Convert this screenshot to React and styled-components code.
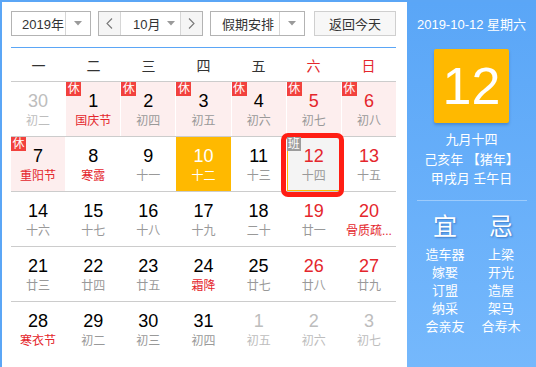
import React from "react";
import styled, { createGlobalStyle, css } from "styled-components";

const Global = createGlobalStyle`
  html, body { margin: 0; padding: 0; background: #fff; }
  body { font-family: "Liberation Sans", "Noto Sans CJK SC", sans-serif; }
`;

const FONT = `"Liberation Sans", "Noto Sans CJK SC", sans-serif`;
const BLUE = "#5ba6f6";
const RED = "#e4262c";

const Frame = styled.div`
  display: flex;
  width: 536px;
  height: 367px;
  box-sizing: border-box;
  border-top: 2px solid ${BLUE};
  border-left: 2px solid ${BLUE};
  overflow: hidden;
  font-family: ${FONT};
`;

const Main = styled.div`
  width: 405px;
  box-sizing: border-box;
  padding: 9px 11px 0 9px;
  display: flex;
  flex-direction: column;
`;

const Toolbar = styled.div`
  display: flex;
  height: 25px;
  font-size: 13px;
  color: #333;
`;

const Box = styled.div`
  display: flex;
  box-sizing: border-box;
  width: ${(p) => p.$w}px;
  margin-left: ${(p) => p.$ml || 0}px;
  border: 1px solid #b3b3b3;
  background: #fff;
`;

const SelText = styled.div`
  flex: 1;
  display: flex;
  align-items: center;
  padding-left: ${(p) => p.$pl}px;
  white-space: nowrap;
`;

const ArrowCell = styled.div`
  width: ${(p) => p.$w}px;
  display: flex;
  align-items: center;
  justify-content: center;
  border-left: ${(p) => (p.$noline ? "none" : "1px solid #d6d6d6")};
`;

const NavBtn = styled.div`
  width: 21px;
  display: flex;
  align-items: center;
  justify-content: center;
  background: #f5f5f5;
  ${(p) =>
    p.$side === "left"
      ? css`border-right: 1px solid #d6d6d6;`
      : css`border-left: 1px solid #d6d6d6;`}
`;

const TodayBtn = styled.div`
  width: 82px;
  margin-left: 9px;
  box-sizing: border-box;
  border: 1px solid #cfcfcf;
  background: #f7f7f7;
  display: flex;
  align-items: center;
  justify-content: center;
`;

const Triangle = () => (
  <svg width="8" height="5" viewBox="0 0 8 5">
    <path d="M0 0 L8 0 L4 4.5 Z" fill="#9a9a9a" />
  </svg>
);

const Chevron = ({ dir }) => (
  <svg width="7" height="11" viewBox="0 0 7 11">
    <polyline
      points={dir === "left" ? "6,0.5 1,5.5 6,10.5" : "1,0.5 6,5.5 1,10.5"}
      fill="none"
      stroke="#777"
      strokeWidth="1.1"
    />
  </svg>
);

const BlueLine = styled.div`
  height: 1px;
  margin-top: 11px;
  background: ${BLUE};
`;

const WeekHead = styled.div`
  display: grid;
  grid-template-columns: repeat(7, 1fr);
  height: 34px;
  box-sizing: border-box;
  border-bottom: 1px solid #cccccc;
  align-items: center;
  text-align: center;
  font-size: 14px;
`;

const WeekDay = styled.div`
  color: ${(p) => (p.$weekend ? RED : "#333")};
`;

const Row = styled.div`
  display: grid;
  grid-template-columns: repeat(7, 1fr);
  column-gap: 1px;
  height: 55px;
  box-sizing: border-box;
  border-bottom: 1px solid #cccccc;
  &:last-child {
    border-bottom: none;
  }
`;

const Cell = styled.div`
  position: relative;
  display: flex;
  flex-direction: column;
  align-items: center;
  padding-top: 9px;
  box-sizing: border-box;
  min-width: 0;
  background: ${(p) =>
    p.$today ? "#ffb900" : p.$rest ? "#fdeeee" : p.$picked ? "#f4f4f4" : "#fff"};
  ${(p) =>
    p.$picked &&
    css`
      box-shadow: inset 0 0 0 1px #ffb900;
      &::after {
        content: "";
        position: absolute;
        left: -6px;
        right: -3px;
        top: -4px;
        bottom: -6px;
        border: 5px solid #ff1e14;
        border-radius: 7px;
        z-index: 2;
      }
    `}
`;

const Num = styled.div`
  font-size: 18px;
  line-height: 20px;
  color: ${(p) => p.$c};
`;

const Lunar = styled.div`
  margin-top: 2px;
  font-size: 12px;
  line-height: 16px;
  color: ${(p) => p.$c};
  white-space: nowrap;
`;

const Badge = styled.div`
  position: absolute;
  left: 0;
  top: 0;
  width: ${(p) => (p.$work ? 14 : 15)}px;
  height: 14px;
  background: ${(p) => (p.$work ? "#9c9c9c" : "#f2413d")};
  color: #fff;
  font-size: 12px;
  line-height: 14px;
  text-align: center;
  z-index: 3;
`;

const Side = styled.div`
  flex: 1;
  display: flex;
  flex-direction: column;
  align-items: center;
  background: linear-gradient(#5aa6f7, #75b8fc);
  color: #fff;
  padding-top: 14px;
`;

const DateLine = styled.div`
  font-size: 13px;
  line-height: 18px;
  white-space: nowrap;
`;

const DayBox = styled.div`
  margin-top: 15px;
  width: 75px;
  height: 74px;
  background: #ffb900;
  border-radius: 2px;
  box-shadow: 0 2px 3px rgba(0, 40, 110, 0.25);
  font-size: 52px;
  line-height: 74px;
  text-align: center;
`;

const LunarInfo = styled.div`
  margin-top: 7px;
  font-size: 13px;
  line-height: 19.5px;
  text-align: center;
  white-space: nowrap;
`;

const Sep = styled.div`
  margin-top: 11px;
  width: 110px;
  height: 1px;
  background: rgba(255, 255, 255, 0.35);
`;

const YiJi = styled.div`
  align-self: stretch;
  display: grid;
  grid-template-columns: 56px 56px;
  padding-left: 10px;
  margin-top: 11px;
  text-align: center;
`;

const YiCol = styled.div`
  display: flex;
  flex-direction: column;
  align-items: center;
`;

const YiHead = styled.div`
  font-size: 24px;
  line-height: 30px;
  margin-bottom: 4px;
  text-shadow: 1px 1px 2px rgba(0, 50, 130, 0.45);
`;

const YiItem = styled.div`
  font-size: 13px;
  line-height: 18px;
  white-space: nowrap;
`;

const weeks = ["一", "二", "三", "四", "五", "六", "日"];

const rows = [
  [
    { d: 30, l: "初二", o: 1 },
    { d: 1, l: "国庆节", r: 1, f: 1 },
    { d: 2, l: "初四", r: 1 },
    { d: 3, l: "初五", r: 1 },
    { d: 4, l: "初六", r: 1 },
    { d: 5, l: "初七", r: 1 },
    { d: 6, l: "初八", r: 1 },
  ],
  [
    { d: 7, l: "重阳节", r: 1, f: 1 },
    { d: 8, l: "寒露", f: 1 },
    { d: 9, l: "十一" },
    { d: 10, l: "十二", today: 1 },
    { d: 11, l: "十三" },
    { d: 12, l: "十四", picked: 1, work: 1 },
    { d: 13, l: "十五" },
  ],
  [
    { d: 14, l: "十六" },
    { d: 15, l: "十七" },
    { d: 16, l: "十八" },
    { d: 17, l: "十九" },
    { d: 18, l: "二十" },
    { d: 19, l: "廿一" },
    { d: 20, l: "骨质疏...", f: 1 },
  ],
  [
    { d: 21, l: "廿三" },
    { d: 22, l: "廿四" },
    { d: 23, l: "廿五" },
    { d: 24, l: "霜降", f: 1 },
    { d: 25, l: "廿七" },
    { d: 26, l: "廿八" },
    { d: 27, l: "廿九" },
  ],
  [
    { d: 28, l: "寒衣节", f: 1 },
    { d: 29, l: "初二" },
    { d: 30, l: "初三" },
    { d: 31, l: "初四" },
    { d: 1, l: "初五", o: 1 },
    { d: 2, l: "初六", o: 1 },
    { d: 3, l: "初七", o: 1 },
  ],
];

const yi = ["造车器", "嫁娶", "订盟", "纳采", "会亲友"];
const ji = ["上梁", "开光", "造屋", "架马", "合寿木"];

export default function App() {
  return (
    <>
      <Global />
      <Frame>
        <Main>
          <Toolbar>
            <Box $w={80}>
              <SelText $pl={10}>2019年</SelText>
              <ArrowCell $w={24}>
                <Triangle />
              </ArrowCell>
            </Box>
            <Box $w={105} $ml={7}>
              <NavBtn $side="left">
                <Chevron dir="left" />
              </NavBtn>
              <SelText $pl={12}>10月</SelText>
              <ArrowCell $w={18} $noline>
                <Triangle />
              </ArrowCell>
              <NavBtn $side="right">
                <Chevron dir="right" />
              </NavBtn>
            </Box>
            <Box $w={95} $ml={7}>
              <SelText $pl={11}>假期安排</SelText>
              <ArrowCell $w={24}>
                <Triangle />
              </ArrowCell>
            </Box>
            <TodayBtn>返回今天</TodayBtn>
          </Toolbar>
          <BlueLine />
          <WeekHead>
            {weeks.map((w, i) => (
              <WeekDay key={w} $weekend={i >= 5}>
                {w}
              </WeekDay>
            ))}
          </WeekHead>
          {rows.map((row, ri) => (
            <Row key={ri}>
              {row.map((c, ci) => {
                const weekend = ci >= 5;
                const numColor = c.today
                  ? "#fff"
                  : c.o
                  ? "#bdbdbd"
                  : weekend
                  ? RED
                  : "#000";
                const lunarColor = c.today
                  ? "#fff"
                  : c.o
                  ? "#bdbdbd"
                  : c.f
                  ? RED
                  : "#999";
                return (
                  <Cell
                    key={ci}
                    $rest={c.r}
                    $today={c.today}
                    $picked={c.picked}
                  >
                    {c.r && <Badge>休</Badge>}
                    {c.work && <Badge $work>班</Badge>}
                    <Num $c={numColor}>{c.d}</Num>
                    <Lunar $c={lunarColor}>{c.l}</Lunar>
                  </Cell>
                );
              })}
            </Row>
          ))}
        </Main>
        <Side>
          <DateLine>2019-10-12 星期六</DateLine>
          <DayBox>12</DayBox>
          <LunarInfo>
            九月十四
            <br />
            己亥年 【猪年】
            <br />
            甲戌月 壬午日
          </LunarInfo>
          <Sep />
          <YiJi>
            <YiCol>
              <YiHead>宜</YiHead>
              {yi.map((t) => (
                <YiItem key={t}>{t}</YiItem>
              ))}
            </YiCol>
            <YiCol>
              <YiHead>忌</YiHead>
              {ji.map((t) => (
                <YiItem key={t}>{t}</YiItem>
              ))}
            </YiCol>
          </YiJi>
        </Side>
      </Frame>
    </>
  );
}
